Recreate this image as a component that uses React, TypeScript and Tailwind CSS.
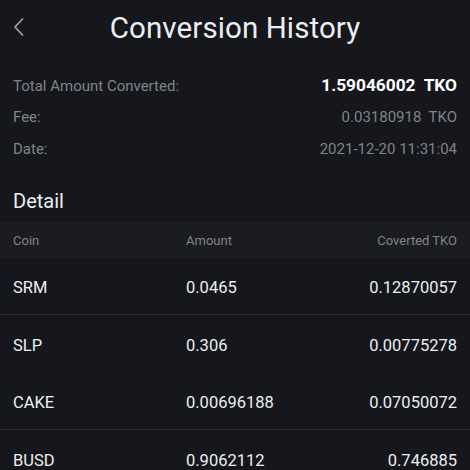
import React from 'react';

const rows = [
  { coin: 'SRM', amount: '0.0465', tko: '0.12870057', line: true },
  { coin: 'SLP', amount: '0.306', tko: '0.00775278', line: false },
  { coin: 'CAKE', amount: '0.00696188', tko: '0.07050072', line: true },
  { coin: 'BUSD', amount: '0.9062112', tko: '0.746885', line: false },
];

export default function App() {
  return (
    <div className="w-[470px] h-[470px] overflow-hidden bg-[#15171c] text-white" style={{ fontFamily: 'Roboto, "Noto Sans", sans-serif' }}>
      {/* Header */}
      <div className="relative h-[58px] flex items-center justify-center">
        <svg className="absolute left-[12px] top-[17px]" width="14" height="20" viewBox="0 0 14 20" fill="none">
          <path d="M10.5 2 L3 10 L10.5 18" stroke="#9a9da4" strokeWidth="1.8" strokeLinecap="round" strokeLinejoin="round" />
        </svg>
        <h1 className="text-[29.5px] leading-none text-[#eceef1] tracking-[0.1px]">Conversion History</h1>
      </div>

      {/* Summary */}
      <div className="px-[13px] pt-[18px] flex flex-col gap-[11.5px] text-[15px]">
        <div className="flex items-center justify-between h-[20px]">
          <span className="text-[#80848c]">Total Amount Converted:</span>
          <span className="text-[17.3px] font-bold text-white">1.59046002&nbsp; TKO</span>
        </div>
        <div className="flex items-center justify-between h-[20px]">
          <span className="text-[#80848c]">Fee:</span>
          <span className="text-[#80848c]">0.03180918&nbsp; TKO</span>
        </div>
        <div className="flex items-center justify-between h-[20px]">
          <span className="text-[#80848c]">Date:</span>
          <span className="text-[#80848c]">2021-12-20 11:31:04</span>
        </div>
      </div>

      {/* Detail */}
      <div className="px-[13px] pt-[27px] pb-[5.5px] text-[20px] leading-[30px] text-[#eceef1]">Detail</div>

      <div className="h-[36px] bg-[#1a1c21] px-[13px] pt-[3px] flex items-center text-[13px] text-[#80848c]">
        <span className="w-[173px]">Coin</span>
        <span className="flex-1">Amount</span>
        <span>Coverted TKO</span>
      </div>

      <div className="text-[16.5px] text-[#eceef1]">
        {rows.map((r) => (
          <div key={r.coin} className={`h-[57.5px] px-[13px] pt-[5px] flex items-center ${r.line ? 'border-b border-[#2a2d33]' : ''}`}>
            <span className="w-[173px]">{r.coin}</span>
            <span className="flex-1">{r.amount}</span>
            <span>{r.tko}</span>
          </div>
        ))}
      </div>
    </div>
  );
}
